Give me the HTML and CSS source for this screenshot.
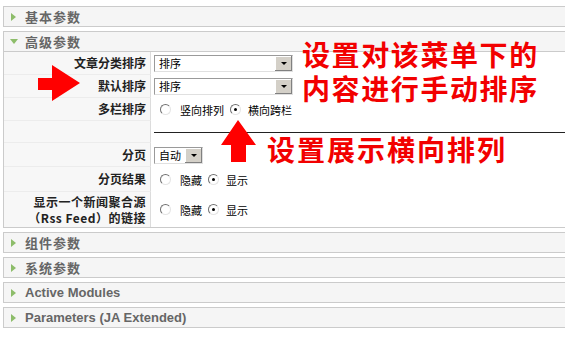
FILE: index.html
```html
<!DOCTYPE html>
<html>
<head>
<meta charset="utf-8">
<link rel="stylesheet" href="styles.css">
</head>
<body>
<div class="page">
  <div class="panel"><div class="ph"><span class="tri-r"></span>基本参数</div></div>
  <div class="panel">
    <div class="ph"><span class="tri-d"></span>高级参数</div>
    <div class="params">
      <div class="row r1"><div class="lab">文章分类排序</div><div class="val"><span class="sel wide"><span class="st">排序</span><span class="sb"><i></i></span></span></div></div>
      <div class="row r1"><div class="lab">默认排序</div><div class="val"><span class="sel wide"><span class="st">排序</span><span class="sb"><i></i></span></span></div></div>
      <div class="row r1"><div class="lab">多栏排序</div><div class="val"><span class="rad"></span><span class="rt">竖向排列</span><span class="rad on"></span><span class="rt">横向跨栏</span></div></div>
      <div class="row r4"><div class="lab"></div><div class="val line"></div></div>
      <div class="row r5"><div class="lab">分页</div><div class="val"><span class="sel small"><span class="st">自动</span><span class="sb"><i></i></span></span></div></div>
      <div class="row r6"><div class="lab">分页结果</div><div class="val"><span class="rad"></span><span class="rt">隐藏</span><span class="rad on"></span><span class="rt">显示</span></div></div>
      <div class="row r7"><div class="lab"><span class="two">显示一个新闻聚合源<br>（Rss Feed）的链接</span></div><div class="val"><span class="rad"></span><span class="rt">隐藏</span><span class="rad on"></span><span class="rt">显示</span></div></div>
    </div>
  </div>
  <div class="panel"><div class="ph"><span class="tri-r"></span>组件参数</div></div>
  <div class="panel"><div class="ph"><span class="tri-r"></span>系统参数</div></div>
  <div class="panel"><div class="ph en"><span class="tri-r"></span>Active Modules</div></div>
  <div class="panel"><div class="ph en"><span class="tri-r"></span>Parameters (JA Extended)</div></div>
</div>

<div class="note n1a">设置对该菜单下的</div>
<div class="note n1b">内容进行手动排序</div>
<div class="note n2">设置展示横向排列</div>
<svg class="arrow a-right" width="46" height="40" viewBox="0 0 46 40"><polygon points="0,13 14,13 14,0 42,18 14,36 14,25 0,25" fill="#f00"/></svg>
<svg class="arrow a-up" width="40" height="44" viewBox="0 0 40 44"><polygon points="18,0 36,25 26,25 26,42 11,42 11,25 1,25" fill="#f00"/></svg>
</body>
</html>
```

FILE: styles.css
```css
html, body {
  margin: 0;
  padding: 0;
  background: #fff;
  overflow: hidden;
  width: 565px;
  height: 353px;
}
body {
  position: relative;
  font-family: "Noto Sans CJK SC", "Liberation Sans", sans-serif;
}
.page {
  padding: 6px 0 0 3px;
  width: 600px;
}
.panel {
  margin-bottom: 4px;
}
.ph {
  height: 19px;
  border: 1px solid #cbcbcb;
  background: #f5f5f5;
  display: flex;
  align-items: center;
  font-size: 13px;
  font-weight: bold;
  color: #666;
  letter-spacing: 1px;
  line-height: 19px;
}
.ph.en {
  font-family: "Liberation Sans", Arial, sans-serif;
  letter-spacing: 0;
}
.tri-r {
  width: 0;
  height: 0;
  border-top: 4px solid transparent;
  border-bottom: 4px solid transparent;
  border-left: 5px solid #8dbd6a;
  margin: 0 9px 0 7px;
}
.tri-d {
  width: 0;
  height: 0;
  border-left: 4px solid transparent;
  border-right: 4px solid transparent;
  border-top: 5px solid #8dbd6a;
  margin: 0 7px 0 6px;
}
.params {
  border-left: 1px solid #cbcbcb;
  border-bottom: 1px solid #cbcbcb;
  background: #fff;
}
.row {
  display: flex;
}
.lab {
  width: 142px;
  padding-right: 4px;
  border-right: 1px solid #dcdcdc;
  border-bottom: 1px solid #ececec;
  background: #f7f7f7;
  text-align: right;
  font-size: 12px;
  font-weight: bold;
  color: #222;
  display: flex;
  align-items: center;
  justify-content: flex-end;
  line-height: 16px;
}
.two {
  display: block;
  line-height: 16px;
}
.r7 .lab {
  border-bottom: 0;
  letter-spacing: 0.5px;
}
.val {
  flex: 1;
  display: flex;
  align-items: center;
  padding-left: 3px;
  font-size: 11px;
  color: #000;
}
.r1 { height: 23px; }
.r4 { height: 22px; }
.r5 { height: 24px; }
.r6 { height: 25px; }
.r7 { height: 35px; }
.val.line {
  align-items: flex-start;
}
.val.line::before {
  content: "";
  display: block;
  width: 100%;
  height: 1px;
  background: #222;
  margin-top: 11px;
}
.sel {
  display: flex;
  height: 15px;
  border: 1px solid #7f9db9;
  border-color: #9a9a9a #e0e0e0 #e0e0e0 #9a9a9a;
  background: #fff;
  align-items: center;
}
.sel.wide { width: 137px; }
.sel.small { width: 47px; }
.st {
  flex: 1;
  padding-left: 4px;
  font-size: 11px;
  line-height: 15px;
}
.sb {
  width: 17px;
  height: 15px;
  background: #d4d0c8;
  border-left: 1px solid #fff;
  box-shadow: inset -1px -1px 0 #808080, inset 1px 1px 0 #fff;
  display: flex;
  align-items: center;
  justify-content: center;
}
.sb i {
  width: 0;
  height: 0;
  border-left: 3px solid transparent;
  border-right: 3px solid transparent;
  border-top: 3px solid #000;
}
.rad {
  width: 9px;
  height: 9px;
  border-radius: 50%;
  border: 1px solid;
  border-color: #707070 #e4e4e4 #e4e4e4 #707070;
  background: #fff;
  margin: 0 9px 0 6px;
  position: relative;
  flex: none;
}
.rt + .rad {
  margin-left: 6px;
  margin-right: 7px;
}
.rad.on::after {
  content: "";
  position: absolute;
  width: 3px;
  height: 3px;
  border-radius: 50%;
  background: #000;
  left: 3px;
  top: 3px;
}
.rt {
  font-size: 11px;
  letter-spacing: 0;
}
.note {
  position: absolute;
  color: #f20000;
  font-family: "Liberation Sans", "Noto Sans CJK SC", sans-serif;
  font-weight: bold;
  font-size: 28px;
  letter-spacing: 1.6px;
  line-height: 30px;
  white-space: nowrap;
}
.n1a { left: 302px; top: 42px; }
.n1b { left: 302px; top: 76px; }
.n2 { left: 267px; top: 137px; letter-spacing: 2px; }
.arrow { position: absolute; }
.a-right { left: 38px; top: 65px; }
.a-up { left: 220px; top: 120px; }
```
